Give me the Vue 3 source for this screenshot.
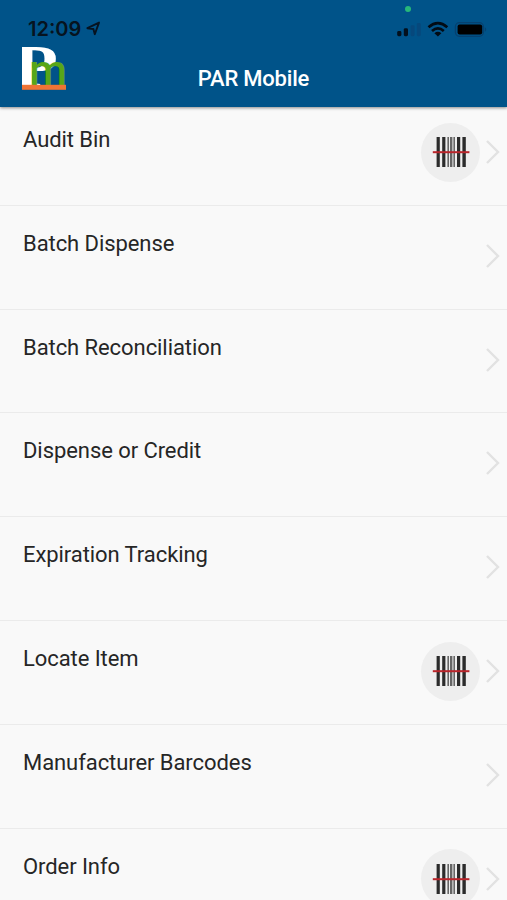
<script setup>
const items = [
  { label: 'Audit Bin', scan: true },
  { label: 'Batch Dispense' },
  { label: 'Batch Reconciliation' },
  { label: 'Dispense or Credit' },
  { label: 'Expiration Tracking' },
  { label: 'Locate Item', scan: true },
  { label: 'Manufacturer Barcodes' },
  { label: 'Order Info', scan: true },
]
</script>

<template>
  <div class="screen">
    <header class="header">
      <div class="status">
        <span class="time">12:09</span>
        <svg class="locate" width="15" height="15" viewBox="0 0 15 15">
          <path d="M1.4 7.2 13 1.6 8.8 13.2 7.4 8Z" fill="none" stroke="#061320" stroke-width="1.9" stroke-linejoin="round" />
        </svg>
        <span class="privacy"></span>
        <svg class="indicators" width="92" height="18" viewBox="0 0 92 18">
          <rect x="1.2" y="11" width="4.2" height="5.2" rx="1.4" fill="#03101d" />
          <rect x="7.8" y="8.2" width="4.2" height="8" rx="1.4" fill="#03101d" />
          <rect x="14.6" y="5.2" width="4" height="11" rx="1.4" fill="#06487c" />
          <rect x="20.8" y="3" width="4" height="13.2" rx="1.4" fill="#06487c" />
          <g fill="none" stroke="#020b14" stroke-width="2.7">
            <path d="M32.5 7.2Q41.9 -1 51.3 7.2" />
            <path d="M36 11Q41.9 5.8 47.8 11" />
          </g>
          <path d="M38.4 13.2Q41.9 10.4 45.4 13.2L41.9 16.6Z" fill="#020b14" />
          <rect x="59.4" y="2.7" width="28" height="13.6" rx="4" fill="none" stroke="#06416f" stroke-width="1.3" />
          <rect x="61.6" y="4.6" width="24.6" height="9.8" rx="2" fill="#000" />
          <path d="M88.8 7Q91.6 9.5 88.8 12Z" fill="#06416f" />
        </svg>
      </div>
      <div class="bar">
        <svg class="logo" width="44" height="44" viewBox="0 0 44 44">
          <text class="logo-p" transform="translate(-8 40.4) scale(1.26 1.05)">P</text>
          <text class="logo-m" transform="translate(7.2 38.8) scale(1.03 1)">m</text>
          <rect y="38.8" width="44" height="5" fill="#ef7435" />
        </svg>
        <h1 class="title">PAR Mobile</h1>
      </div>
    </header>
    <ul class="list">
      <li v-for="item in items" :key="item.label" class="row">
        <span class="label">{{ item.label }}</span>
        <span v-if="item.scan" class="scan">
          <svg width="38" height="32" viewBox="0 0 38 32">
            <g fill="#2b2b2b">
              <rect x="4.6" y="1" width="3.2" height="30" />
              <rect x="10.2" y="1" width="3.2" height="30" />
              <rect x="25" y="1" width="3.2" height="30" />
              <rect x="30.4" y="1" width="3.4" height="30" />
            </g>
            <g fill="#666">
              <rect x="15.4" y="1" width="1.6" height="30" />
              <rect x="18" y="1" width="2.4" height="30" />
              <rect x="21.4" y="1" width="1.6" height="30" />
            </g>
            <rect x=".8" y="15.2" width="36.6" height="2" fill="#b9252b" />
          </svg>
        </span>
        <svg class="chevron" width="16" height="26" viewBox="0 0 16 26">
          <path d="M2 2 13 13 2 24" fill="none" stroke="#e2e2e2" stroke-width="2.4" />
        </svg>
      </li>
    </ul>
  </div>
</template>

<style>
body {
  margin: 0;
  overflow: hidden;
  background: #f9f9f9;
}
</style>

<style scoped>
.screen {
  height: 900px;
  overflow: hidden;
  background: #f9f9f9;
  color: #262626;
  font-family: Roboto, sans-serif;
}
.header {
  position: relative;
  height: 106.5px;
  background: #005389;
  box-shadow: 0 1px 3px rgba(0, 0, 0, 0.45);
}
.status {
  display: flex;
  align-items: center;
  height: 46px;
  padding: 11px 19px 0 28px;
  box-sizing: border-box;
}
.time {
  color: #061320;
  font: 600 20px/24px Inter, sans-serif;
}
.locate {
  margin-left: 5px;
}
.privacy {
  position: absolute;
  left: 405px;
  top: 6px;
  width: 6px;
  height: 6px;
  border-radius: 50%;
  background: #27b87a;
}
.indicators {
  margin-left: auto;
}
.bar {
  display: grid;
  grid-template-columns: 44px 1fr 44px;
  padding: 0 22px;
}
.logo {
  display: block;
  margin-top: 0.3px;
  overflow: hidden;
}
.logo-p {
  fill: #fff;
  font: 700 57px "Liberation Serif", serif;
}
.logo-m {
  fill: #58a618;
  font: 500 42px Roboto, sans-serif;
}
.title {
  margin: 19px 0 0;
  color: #fff;
  font-size: 22px;
  font-weight: 500;
  line-height: 27px;
  letter-spacing: -0.2px;
  text-align: center;
}
.list {
  margin: -4.5px 0 0;
  padding: 0;
  list-style: none;
}
.row {
  display: flex;
  align-items: flex-start;
  height: 103.8px;
  padding: 0 6px 0 23px;
  box-sizing: border-box;
  border-bottom: 1px solid #ebebeb;
}
.label {
  flex: 1;
  padding-top: 24px;
  font-size: 22px;
  line-height: 28px;
  letter-spacing: -0.07px;
}
.scan {
  display: flex;
  align-items: center;
  justify-content: center;
  width: 59px;
  height: 59px;
  margin: 20.6px 5px 0 0;
  border-radius: 50%;
  background: #eeeeee;
}
.chevron {
  margin-top: 37px;
}
</style>
